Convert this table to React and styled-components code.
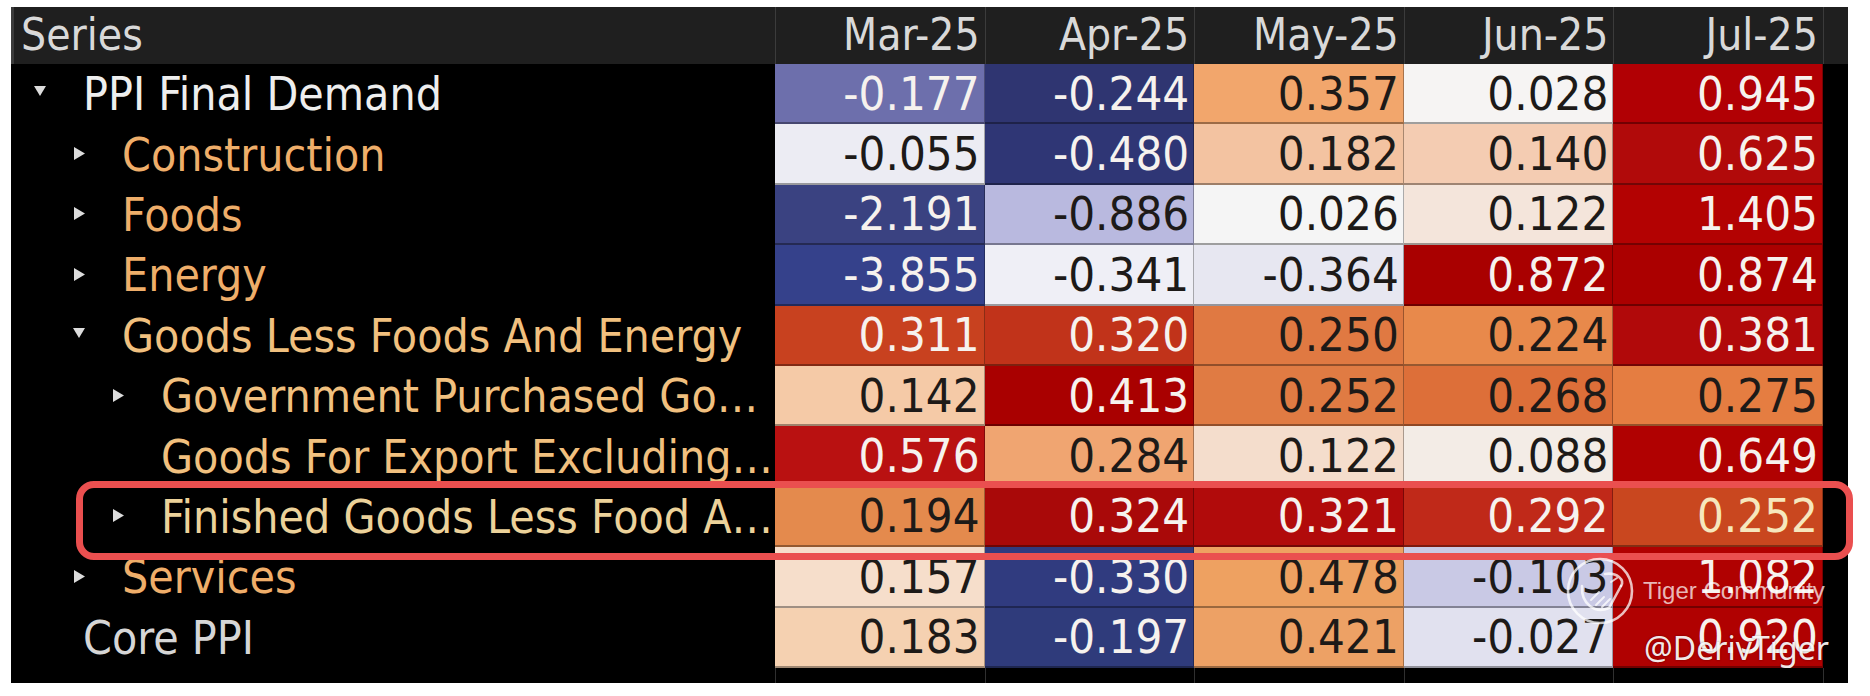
import React from "react";
import styled, { createGlobalStyle } from "styled-components";

const GlobalStyle = createGlobalStyle`
  html, body { margin: 0; padding: 0; background: #ffffff; }
  body { width: 1870px; height: 696px; overflow: hidden; }
`;

const FONT = `"DejaVu Sans Condensed", "DejaVu Sans", sans-serif`;
const COLS = "764px repeat(5, 209.6px) 25px";

const Page = styled.div`
  padding: 7px 0 0 11px;
`;

const Table = styled.div`
  position: relative;
  width: 1837px;
  background: #000;
  font-family: ${FONT};
  font-stretch: condensed;
`;

const HeaderRow = styled.div`
  display: grid;
  grid-template-columns: ${COLS};
  height: 57px;
  background: #1f1f1f;
  box-shadow: inset 3px 0 0 #3a3a3a;
`;

const HeaderCell = styled.div`
  display: flex;
  align-items: center;
  justify-content: ${(p) => (p.$left ? "flex-start" : "flex-end")};
  padding: ${(p) => (p.$left ? "0 0 2px 10px" : "0 5px 2px 0")};
  font-size: 44px;
  line-height: 1;
  color: #d9d9d9;
  box-sizing: border-box;
  border-left: ${(p) => (p.$left ? "none" : "1px solid #3b3b3b")};
  white-space: nowrap;
`;

const DataRow = styled.div`
  display: grid;
  grid-template-columns: ${COLS};
  height: 60.4px;
`;

const LabelCell = styled.div`
  display: flex;
  align-items: center;
  padding-left: ${(p) => 23 + p.$level * 39}px;
  font-size: 46px;
  line-height: 1;
  color: ${(p) => p.$color};
  white-space: nowrap;
  overflow: hidden;
`;

const Toggle = styled.span`
  display: inline-flex;
  width: 12px;
  margin-right: 37px;
  flex: none;
  align-items: center;
  justify-content: center;
  margin-top: ${(p) => (p.$down ? "-6px" : "-2px")};
`;

const ValueCell = styled.div`
  display: flex;
  align-items: center;
  justify-content: flex-end;
  padding-right: 4px;
  box-sizing: border-box;
  background: ${(p) => p.$bg};
  color: ${(p) => p.$fg};
  font-size: 47px;
  line-height: 1;
  border-bottom: 2px solid rgba(0, 0, 0, 0.35);
  border-right: 1px solid rgba(0, 0, 0, 0.3);
`;

const Filler = styled.div`
  background: #000;
`;

const FooterRow = styled.div`
  display: grid;
  grid-template-columns: ${COLS};
  height: 15px;
`;

const FooterCell = styled.div`
  border-left: ${(p) => (p.$line ? "1px solid #2f2f2f" : "none")};
`;

const Highlight = styled.div`
  position: absolute;
  left: 65px;
  top: 474px;
  width: 1777px;
  height: 79px;
  box-sizing: border-box;
  border: 7px solid #ea4f4f;
  border-radius: 18px;
  pointer-events: none;
`;

const Watermark = styled.div`
  position: absolute;
  left: 1554px;
  top: 549px;
  display: flex;
  flex-direction: column;
  pointer-events: none;
`;

const MarkLine = styled.div`
  display: flex;
  align-items: center;
  gap: 8px;
`;

const MarkText = styled.span`
  font-family: "Liberation Sans", Arial, sans-serif;
  font-size: 24px;
  color: rgba(255, 255, 255, 0.72);
  white-space: nowrap;
`;

const Handle = styled.span`
  margin: 4px 0 0 79px;
  font-family: "Noto Sans", "Open Sans", sans-serif;
  font-size: 32px;
  line-height: 36px;
  color: rgba(255, 255, 255, 0.93);
  white-space: nowrap;
  text-shadow: 0 0 2px rgba(0, 0, 0, 0.4);
`;

const L = "#f6f2ee";
const D = "#1d1a18";
const ORANGE = "#efae6a";
const ORANGE2 = "#f1c07f";

const rows = [
  {
    label: "PPI Final Demand", level: 0, toggle: "down", color: "#eeeeee",
    cells: [["-0.177", "#6d6fac", L], ["-0.244", "#2f3571", L], ["0.357", "#f2a66c", D], ["0.028", "#f6f4f3", D], ["0.945", "#b10004", L]],
  },
  {
    label: "Construction", level: 1, toggle: "right", color: ORANGE,
    cells: [["-0.055", "#ececf3", D], ["-0.480", "#2f3675", L], ["0.182", "#f3c3a1", D], ["0.140", "#f4ccb2", D], ["0.625", "#b10a0a", L]],
  },
  {
    label: "Foods", level: 1, toggle: "right", color: ORANGE,
    cells: [["-2.191", "#3a4281", L], ["-0.886", "#b9b9df", D], ["0.026", "#f5f5f5", D], ["0.122", "#f4e5db", D], ["1.405", "#b30202", L]],
  },
  {
    label: "Energy", level: 1, toggle: "right", color: ORANGE,
    cells: [["-3.855", "#35418b", L], ["-0.341", "#efeff6", D], ["-0.364", "#e7e7f1", D], ["0.872", "#a90000", L], ["0.874", "#ab0000", L]],
  },
  {
    label: "Goods Less Foods And Energy", level: 1, toggle: "down", color: ORANGE2,
    cells: [["0.311", "#c8411f", L], ["0.320", "#c1331a", L], ["0.250", "#e07942", D], ["0.224", "#e8894b", D], ["0.381", "#b1090a", L]],
  },
  {
    label: "Government Purchased Go…", level: 2, toggle: "right", color: ORANGE2,
    cells: [["0.142", "#f5caa7", D], ["0.413", "#a90000", L], ["0.252", "#e07b43", D], ["0.268", "#dd6f39", D], ["0.275", "#e57d41", D]],
  },
  {
    label: "Goods For Export Excluding…", level: 2, toggle: null, color: ORANGE2,
    cells: [["0.576", "#b91111", L], ["0.284", "#f0a571", D], ["0.122", "#f4ddcc", D], ["0.088", "#f3ece6", D], ["0.649", "#b00101", L]],
  },
  {
    label: "Finished Goods Less Food A…", level: 2, toggle: "right", color: "#ecd29a",
    cells: [["0.194", "#e48a4d", D], ["0.324", "#a90909", L], ["0.321", "#b10b0b", L], ["0.292", "#c02919", L], ["0.252", "#c9471f", "#f6e7bd"]],
  },
  {
    label: "Services", level: 1, toggle: "right", color: ORANGE,
    cells: [["0.157", "#f6decb", D], ["-0.330", "#303b7f", L], ["0.478", "#eea161", D], ["-0.103", "#c9c9e5", D], ["1.082", "#b00101", L]],
  },
  {
    label: "Core PPI", level: 0, toggle: null, color: "#d6d6d6",
    cells: [["0.183", "#f5d1b1", D], ["-0.197", "#2f3b7b", L], ["0.421", "#eda165", D], ["-0.027", "#e1e1ef", D], ["0.920", "#b00101", L]],
  },
];

const months = ["Mar-25", "Apr-25", "May-25", "Jun-25", "Jul-25"];

function Arrow({ dir }) {
  if (dir === "down") {
    return (
      <svg width="12" height="10" viewBox="0 0 12 10">
        <polygon points="0,0 12,0 6,10" fill="#dcdcdc" />
      </svg>
    );
  }
  return (
    <svg width="11" height="13" viewBox="0 0 11 13">
      <polygon points="0,0 11,6.5 0,13" fill="#dcdcdc" />
    </svg>
  );
}

function TigerLogo() {
  return (
    <svg width="70" height="70" viewBox="0 0 70 70">
      <g fill="none" stroke="rgba(255,255,255,0.75)" strokeWidth="2.6" strokeLinecap="round">
        <circle cx="35" cy="35" r="32" />
        <path d="M17 30 C 16 48, 30 58, 44 52 L 56 30" />
        <path d="M40 18 C 52 16, 60 24, 56 30" />
        <path d="M26 44 L 34 36 M31 49 L 39 41 M37 51 L 45 43" strokeWidth="2" />
        <path d="M46 26 L 52 22" strokeWidth="2" />
      </g>
    </svg>
  );
}

export default function App() {
  return (
    <>
      <GlobalStyle />
      <Page>
        <Table>
          <HeaderRow>
            <HeaderCell $left>Series</HeaderCell>
            {months.map((m) => (
              <HeaderCell key={m}>{m}</HeaderCell>
            ))}
            <HeaderCell />
          </HeaderRow>
          {rows.map((r) => (
            <DataRow key={r.label}>
              <LabelCell $level={r.level} $color={r.color}>
                <Toggle $down={r.toggle === "down"}>{r.toggle && <Arrow dir={r.toggle} />}</Toggle>
                {r.label}
              </LabelCell>
              {r.cells.map(([v, bg, fg], i) => (
                <ValueCell key={i} $bg={bg} $fg={fg}>
                  {v}
                </ValueCell>
              ))}
              <Filler />
            </DataRow>
          ))}
          <FooterRow>
            <FooterCell />
            {months.map((m) => (
              <FooterCell key={m} $line />
            ))}
            <FooterCell $line />
          </FooterRow>
          <Highlight />
          <Watermark>
            <MarkLine>
              <TigerLogo />
              <MarkText>Tiger Community</MarkText>
            </MarkLine>
            <Handle>@DerivTiger</Handle>
          </Watermark>
        </Table>
      </Page>
    </>
  );
}
